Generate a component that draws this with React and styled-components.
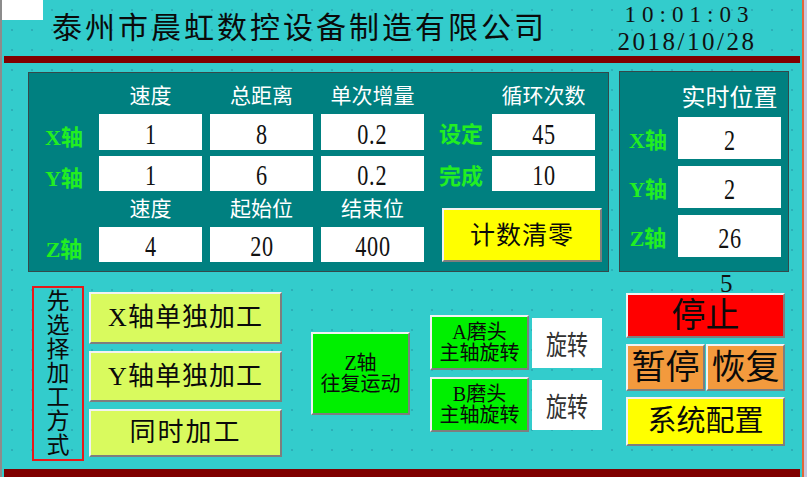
import React from 'react';
import styled, { createGlobalStyle } from 'styled-components';

const CN = `"Liberation Serif", "Noto Sans CJK SC", serif`;

const GlobalStyle = createGlobalStyle`
  html, body {
    margin: 0;
    padding: 0;
    background: #c9c6de;
  }
  body {
    font-family: ${CN};
  }
`;

const Screen = styled.div`
  width: 804px;
  height: 477px;
  box-sizing: border-box;
  border-left: 2px solid #8c8c8c;
  border-right: 2px solid #e0683a;
  background-color: #33cccc;
  background-image: radial-gradient(circle at 10px 10px, rgba(30, 110, 140, 0.3) 0.7px, transparent 1.4px);
  background-size: 20px 20px;
  display: flex;
  flex-direction: column;
  overflow: hidden;
`;

const Header = styled.header`
  height: 56px;
  display: flex;
  align-items: center;
`;

const Corner = styled.div`
  width: 41px;
  height: 20px;
  background: #fff;
  align-self: flex-start;
  flex-shrink: 0;
`;

const Title = styled.h1`
  margin: 0 0 0 9px;
  font-size: 30px;
  font-weight: 400;
  letter-spacing: 3px;
  line-height: 56px;
  color: #0a0a0a;
  white-space: nowrap;
`;

const Clock = styled.div`
  margin-left: auto;
  margin-right: 35px;
  width: 160px;
  padding-top: 2px;
  align-self: flex-start;
  display: flex;
  flex-direction: column;
  align-items: center;
  color: #111;
`;

const Time = styled.div`
  font-size: 23px;
  line-height: normal;
  letter-spacing: 6px;
  padding-left: 5px;
`;

const DateLine = styled.div`
  font-size: 25px;
  line-height: normal;
  letter-spacing: 2.5px;
`;

const Rule = styled.div`
  height: ${(p) => p.$h}px;
  margin: 0 2px;
  background: #800000;
  flex-shrink: 0;
`;

const Main = styled.main`
  display: flex;
  align-items: flex-start;
  padding: 8px 0 0 26px;
  height: 209px;
  box-sizing: border-box;
`;

const Panel = styled.section`
  box-sizing: border-box;
  border: 1px solid #34494a;
  background: #008080;
  display: grid;
  column-gap: 8px;
`;

const SettingsPanel = styled(Panel)`
  margin-top: 1px;
  width: 581px;
  height: 200px;
  grid-template-columns: 62px 103px 103px 103px 52px 103px;
  grid-template-rows: 35px 36px 35px 24px 35px;
  row-gap: 6px;
`;

const PositionPanel = styled(Panel)`
  margin-left: 10px;
  width: 170px;
  height: 201px;
  grid-template-columns: 50px 103px;
  grid-template-rows: 38px 42px 42px 42px;
  row-gap: 7px;
`;

const ColHead = styled.div`
  align-self: end;
  text-align: center;
  color: #fff;
  font-size: ${(p) => p.$size || 21}px;
  line-height: 24px;
  white-space: nowrap;
`;

const AxisLabel = styled.div`
  display: flex;
  align-items: center;
  justify-content: center;
  padding: ${(p) => (p.$shift ? '5px 0 0 8px' : '0 0 0 6px')};
  color: #22ee22;
  font-size: 22px;
  font-weight: 700;
  white-space: nowrap;
`;

const Field = styled.div`
  background: #fff;
  display: flex;
  align-items: center;
  justify-content: center;
  overflow: hidden;
`;

const Digits = styled.span`
  display: inline-block;
  font-family: "Liberation Serif", serif;
  font-size: 30px;
  line-height: 30px;
  color: #111;
  letter-spacing: 1px;
  transform: scaleX(0.74);
  margin-top: 3px;
`;

const Key = styled.button`
  box-sizing: border-box;
  margin: 0;
  padding: 0;
  border: 2px solid;
  border-color: #f2f2f2 #7e7e7e #7e7e7e #f2f2f2;
  background: ${(p) => p.$bg};
  color: #0a0a0a;
  font-family: ${CN};
  font-size: ${(p) => p.$size}px;
  line-height: ${(p) => p.$lh || p.$size + 2}px;
  letter-spacing: ${(p) => p.$ls || 0}px;
  width: ${(p) => (p.$w ? `${p.$w}px` : '100%')};
  height: ${(p) => p.$h}px;
  display: flex;
  flex-direction: column;
  align-items: center;
  justify-content: center;
  white-space: nowrap;
  cursor: pointer;
`;

const ClearKey = styled(Key)`
  grid-column: 5 / 7;
  grid-row: 4 / 6;
  align-self: end;
  margin-left: 10px;
`;

const Bottom = styled.section`
  height: 197px;
  display: flex;
  align-items: flex-start;
  flex-shrink: 0;
`;

const ModeBox = styled.div`
  box-sizing: border-box;
  margin: 14px 0 0 30px;
  width: 52px;
  height: 175px;
  border: 2px solid #e81818;
  display: flex;
  flex-direction: column;
  align-items: center;
  justify-content: center;
  font-size: 23px;
  line-height: 24px;
  color: #0a0a0a;
`;

const ModeStack = styled.div`
  margin: 20px 0 0 5px;
  width: 193px;
  display: flex;
  flex-direction: column;
  gap: 7px;
`;

const ZSlot = styled.div`
  margin: 60px 0 0 29px;
`;

const SpindleStack = styled.div`
  margin: 43px 0 0 20px;
  display: flex;
  flex-direction: column;
  gap: 7px;
`;

const SpindleRow = styled.div`
  display: flex;
  align-items: center;
  gap: 3px;
`;

const StateBox = styled.div`
  width: 70px;
  height: 50px;
  background: #fff;
  display: flex;
  align-items: center;
  justify-content: center;
`;

const StateText = styled.span`
  display: inline-block;
  font-size: 21px;
  color: #333;
  transform: scaleY(1.3);
`;

const ControlStack = styled.div`
  margin-left: 24px;
  width: 159px;
  display: flex;
  flex-direction: column;
  gap: 6px;
`;

const StrayDigit = styled.div`
  height: 21px;
  margin-bottom: -6px;
  padding-left: 94px;
  font-family: "Liberation Serif", serif;
  font-size: 25px;
  line-height: 24px;
  color: #111;
`;

const KeyPair = styled.div`
  display: flex;
  gap: 1px;
`;

const settings = [
  { axis: 'X轴', values: ['1', '8', '0.2'], tag: '设定', count: '45' },
  { axis: 'Y轴', values: ['1', '6', '0.2'], tag: '完成', count: '10' },
];

const positions = [
  ['X轴', '2'],
  ['Y轴', '2'],
  ['Z轴', '26'],
];

const Value = ({ children }) => (
  <Field>
    <Digits>{children}</Digits>
  </Field>
);

const App = () => (
  <>
    <GlobalStyle />
    <Screen>
      <Header>
        <Corner />
        <Title>泰州市晨虹数控设备制造有限公司</Title>
        <Clock>
          <Time>10:01:03</Time>
          <DateLine>2018/10/28</DateLine>
        </Clock>
      </Header>
      <Rule $h={7} />

      <Main>
        <SettingsPanel>
          <div />
          <ColHead>速度</ColHead>
          <ColHead>总距离</ColHead>
          <ColHead>单次增量</ColHead>
          <div />
          <ColHead>循环次数</ColHead>

          {settings.map((row) => (
            <React.Fragment key={row.axis}>
              <AxisLabel $shift>{row.axis}</AxisLabel>
              {row.values.map((v, i) => (
                <Value key={i}>{v}</Value>
              ))}
              <AxisLabel>{row.tag}</AxisLabel>
              <Value>{row.count}</Value>
            </React.Fragment>
          ))}

          <div />
          <ColHead>速度</ColHead>
          <ColHead>起始位</ColHead>
          <ColHead>结束位</ColHead>
          <ClearKey $bg="#ffff00" $size={25} $w={160} $h={54} $ls={1}>
            计数清零
          </ClearKey>

          <AxisLabel $shift>Z轴</AxisLabel>
          <Value>4</Value>
          <Value>20</Value>
          <Value>400</Value>
        </SettingsPanel>

        <PositionPanel>
          <div />
          <ColHead $size={24}>实时位置</ColHead>
          {positions.map(([axis, v]) => (
            <React.Fragment key={axis}>
              <AxisLabel>{axis}</AxisLabel>
              <Value>{v}</Value>
            </React.Fragment>
          ))}
        </PositionPanel>
      </Main>

      <Bottom>
        <ModeBox>
          {'先选择加工方式'.split('').map((c, i) => (
            <span key={i}>{c}</span>
          ))}
        </ModeBox>

        <ModeStack>
          <Key $bg="#d9fa5e" $size={26} $h={52} $ls={1}>X轴单独加工</Key>
          <Key $bg="#d9fa5e" $size={26} $h={51} $ls={1}>Y轴单独加工</Key>
          <Key $bg="#d9fa5e" $size={26} $h={48} $ls={2}>同时加工</Key>
        </ModeStack>

        <ZSlot>
          <Key $bg="#00f000" $size={20} $lh={21} $w={99} $h={83}>
            <span>Z轴</span>
            <span>往复运动</span>
          </Key>
        </ZSlot>

        <SpindleStack>
          {['A', 'B'].map((head) => (
            <SpindleRow key={head}>
              <Key $bg="#00f000" $size={20} $lh={21} $w={99} $h={55}>
                <span>{head}磨头</span>
                <span>主轴旋转</span>
              </Key>
              <StateBox>
                <StateText>旋转</StateText>
              </StateBox>
            </SpindleRow>
          ))}
        </SpindleStack>

        <ControlStack>
          <StrayDigit>5</StrayDigit>
          <Key $bg="#ff0000" $size={34} $h={45}>停止</Key>
          <KeyPair>
            <Key $bg="#f39a3d" $size={34} $h={47}>暂停</Key>
            <Key $bg="#f39a3d" $size={34} $h={47}>恢复</Key>
          </KeyPair>
          <Key $bg="#ffff00" $size={29} $h={49}>系统配置</Key>
        </ControlStack>
      </Bottom>

      <Rule $h={8} />
    </Screen>
  </>
);

export default App;
